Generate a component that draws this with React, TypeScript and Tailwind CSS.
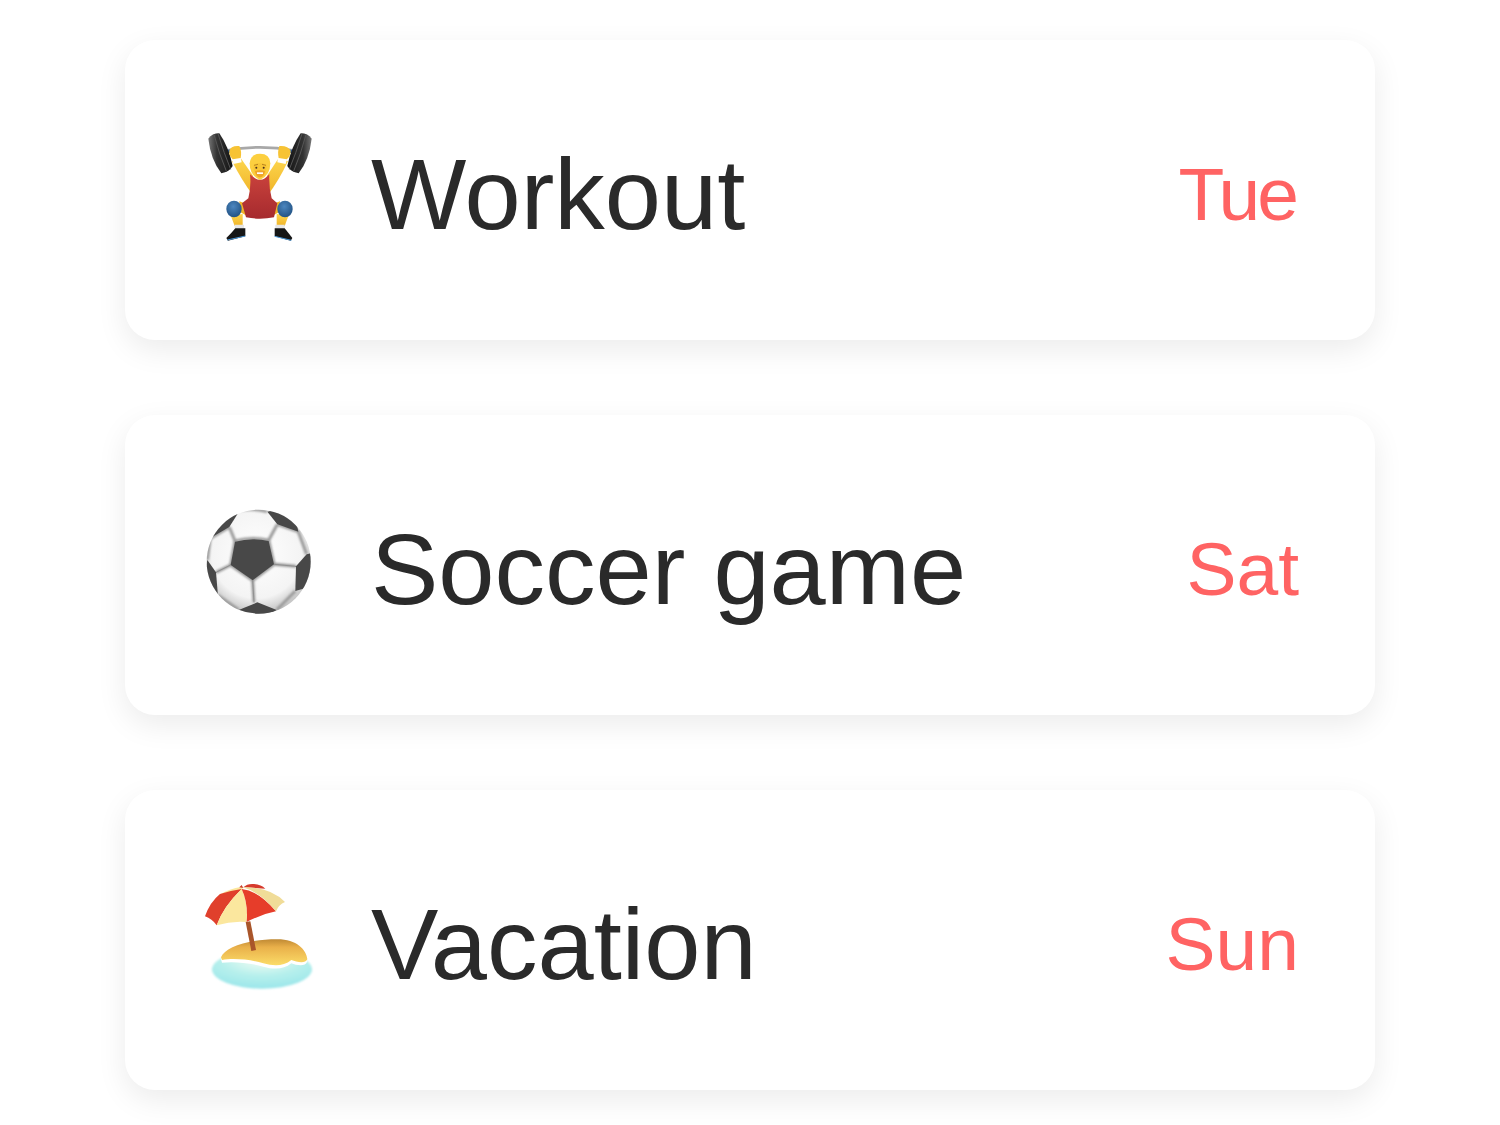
import type { ReactNode } from "react";

function Lifter() {
  return (
    <svg viewBox="0 0 420 390" className="mb-[10px] h-[130px] w-[140px] shrink-0">
      <defs>
        <linearGradient id="plate" x1="0" x2="1" y1="0" y2="0">
          <stop offset="0" stopColor="#777" />
          <stop offset="0.35" stopColor="#333" />
          <stop offset="1" stopColor="#141414" />
        </linearGradient>
        <linearGradient id="plate2" x1="1" x2="0" y1="0" y2="0">
          <stop offset="0" stopColor="#777" />
          <stop offset="0.35" stopColor="#333" />
          <stop offset="1" stopColor="#141414" />
        </linearGradient>
        <linearGradient id="skin" x1="0" x2="0" y1="0" y2="1">
          <stop offset="0" stopColor="#fdd64e" />
          <stop offset="1" stopColor="#f0b428" />
        </linearGradient>
        <linearGradient id="suit" x1="0" x2="0" y1="0" y2="1">
          <stop offset="0" stopColor="#c9423c" />
          <stop offset="1" stopColor="#a62a2e" />
        </linearGradient>
        <radialGradient id="knee" cx="0.45" cy="0.35" r="0.7">
          <stop offset="0" stopColor="#4c86bf" />
          <stop offset="1" stopColor="#1f4f80" />
        </radialGradient>
      </defs>

      {/* bar */}
      <path d="M108 92 Q210 72 312 92" fill="none" stroke="#a8a8a8" strokeWidth="8" />
      <path d="M104 94h20M296 94h20" stroke="#2b5fa5" strokeWidth="10" />

      {/* plates */}
      <path d="M55 56 Q66 40 88 40 Q116 80 128 138 Q118 156 94 160 Q62 118 55 56Z" fill="url(#plate)" />
      <path d="M365 56 Q354 40 332 40 Q304 80 292 138 Q302 156 326 160 Q358 118 365 56Z" fill="url(#plate2)" />
      <path d="M72 44 Q88 104 110 156M84 41 Q102 100 122 148M348 44 Q332 104 310 156M336 41 Q318 100 298 148" fill="none" stroke="#565656" strokeWidth="3" />

      {/* arms */}
      <path d="M126 124 L152 114 L188 166 L186 222 Q156 182 126 124Z" fill="url(#skin)" />
      <path d="M294 124 L266 114 L232 166 L236 222 Q266 182 294 124Z" fill="url(#skin)" />
      <path d="M126 116l26-4 3 15-25 5ZM264 112l27 4-4 16-25-5Z" fill="#fff" />
      <path d="M118 92 Q122 76 148 78 Q156 94 152 114 L128 118 Q116 106 118 92Z" fill="#f7c334" />
      <path d="M268 78 Q294 76 302 92 Q302 108 290 118 L266 114 Q262 94 268 78Z" fill="#f7c334" />

      {/* legs */}
      <path d="M122 286 L158 282 L158 318 L134 318Z" fill="url(#skin)" />
      <path d="M296 286 L260 282 L260 318 L284 318Z" fill="url(#skin)" />
      <path d="M134 314h28v12h-28ZM256 314h28v12h-28Z" fill="#e6e6e6" />
      <path d="M148 244 L176 254 L176 290 L150 276Z" fill="#f0b428" />
      <path d="M270 244 L242 254 L242 290 L268 276Z" fill="#f0b428" />

      {/* singlet */}
      <path d="M180 163 L195 175 Q210 184 225 175 L238 163 Q236 200 245 235 L262 250 L252 292 Q210 300 168 292 L156 250 L175 235 Q184 200 180 163Z" fill="url(#suit)" />

      {/* head */}
      <path d="M179 130 Q182 101 210 101 Q240 101 241 130 Q241 166 210 180 Q179 166 179 130Z" fill="#fccf3f" />
      <path d="M191 134 Q210 124 229 134 Q233 162 210 174 Q187 162 191 134Z" fill="#f8c636" />
      <path d="M195 154 Q210 148 225 154 Q222 172 210 172 Q198 172 195 154Z" fill="#efa62a" />
      <path d="M201 157h18v5h-18Z" fill="#fff" />
      <circle cx="199" cy="143" r="3" fill="#4a2f1e" />
      <circle cx="221" cy="143" r="3" fill="#4a2f1e" />
      <path d="M192 136l12-3M228 136l-12-3" stroke="#b98420" strokeWidth="3" />

      {/* knees */}
      <ellipse cx="132" cy="267" rx="23" ry="25" fill="url(#knee)" />
      <ellipse cx="285" cy="267" rx="23" ry="25" fill="url(#knee)" />

      {/* shoes */}
      <path d="M136 325h30v24 l-52 13 -5-8Q124 340 136 325Z" fill="#161616" />
      <path d="M254 325h30Q296 340 307 354l-5 8 -48-13Z" fill="#161616" />
      <path d="M112 360l54-12M254 349l50 12" stroke="#4a97d8" strokeWidth="3" />
    </svg>
  );
}

function Ball() {
  return (
    <svg viewBox="0 0 420 390" className="mb-[10px] h-[130px] w-[140px] shrink-0">
      <defs>
        <radialGradient id="ball" cx="0.48" cy="0.42" r="0.6">
          <stop offset="0" stopColor="#ffffff" />
          <stop offset="0.72" stopColor="#f4f4f4" />
          <stop offset="1" stopColor="#bdbdbd" />
        </radialGradient>
        <clipPath id="round">
          <circle cx="206" cy="200" r="156" />
        </clipPath>
        <filter id="bevel" x="-5%" y="-5%" width="110%" height="110%">
          <feGaussianBlur stdDeviation="2.5" />
        </filter>
      </defs>
      <circle cx="206" cy="200" r="156" fill="url(#ball)" />
      <g clipPath="url(#round)">
        <g fill="none" stroke="#9a9a9a" strokeWidth="9" filter="url(#bevel)">
          <path d="M118 96 L135 138 M236 136 L262 88 M150 45 Q190 38 232 50" />
          <path d="M60 130 L118 96 M262 88 L325 110 L350 178" />
          <path d="M52 195 L60 130 M122 210 L78 232 M252 208 L318 214" />
          <path d="M188 256 L192 322 M82 300 L146 345 M316 288 L260 345" />
          <path d="M135 138 Q185 124 236 136 L252 208 L188 256 L122 210Z" />
        </g>
        <path d="M188 256 L192 322M78 232 L122 210M252 208 L318 214" fill="none" stroke="#8c8c8c" strokeWidth="2.5" />
        <g fill="#484848">
          <path d="M135 140 Q185 126 236 138 L252 208 L188 256 L122 210Z" />
          <path d="M150 45 L118 96 L60 130 L40 85Z" />
          <path d="M232 50 L262 88 L325 110 L310 30Z" />
          <path d="M52 195 L78 232 L84 304 L30 290Z" />
          <path d="M350 178 L318 214 L316 288 L380 270 L380 170Z" />
          <path d="M146 345 L202 322 L260 345 L210 380Z" />
        </g>
      </g>
    </svg>
  );
}

function Island() {
  return (
    <svg viewBox="0 0 420 390" className="mb-[10px] h-[130px] w-[140px] shrink-0">
      <defs>
        <radialGradient id="water" cx="0.5" cy="0.25" r="0.75">
          <stop offset="0" stopColor="#f6fdf4" />
          <stop offset="0.55" stopColor="#b7f0ec" />
          <stop offset="1" stopColor="#9be6ea" />
        </radialGradient>
        <linearGradient id="sand" x1="0" x2="0" y1="0" y2="1">
          <stop offset="0" stopColor="#c08a34" />
          <stop offset="0.3" stopColor="#e9b04a" />
          <stop offset="1" stopColor="#fbdc68" />
        </linearGradient>
        <filter id="soft" x="-10%" y="-10%" width="120%" height="120%">
          <feGaussianBlur stdDeviation="3" />
        </filter>
      </defs>

      <ellipse cx="216" cy="298" rx="150" ry="58" fill="url(#water)" filter="url(#soft)" />
      <path d="M93 262 C105 232 170 208 262 208 C320 208 350 240 352 268 C346 286 320 280 304 274 C280 294 250 292 220 284 C180 272 130 268 96 272Z" fill="#fff" transform="translate(0 6)" />
      <path d="M93 262 C105 232 170 208 262 208 C320 208 350 240 352 268 C346 282 320 276 304 270 C280 290 250 288 220 280 C180 268 130 264 96 270Z" fill="url(#sand)" />

      {/* pole */}
      <path d="M167 156 L181 154 L198 240 L184 243Z" fill="#a9552a" />

      {/* canopy */}
      <path d="M160 52 Q172 40 192 42 Q214 44 226 56Z" fill="#d63a2c" />
      <path d="M88 74 Q118 56 155 50 L160 60 Q120 70 90 84Z" fill="#fbe79e" />
      <path d="M45 139 Q60 96 90 72 Q120 62 155 57 Q100 110 80 166 Q66 146 45 139Z" fill="#e0402c" />
      <path d="M155 57 Q175 100 170 156 Q125 152 80 166 Q100 110 155 57Z" fill="#fbe79e" />
      <path d="M155 57 Q205 62 258 124 Q216 132 170 156 Q175 100 155 57Z" fill="#e63d2a" />
      <path d="M158 52 Q240 50 285 96 Q266 104 258 124 Q210 66 158 52Z" fill="#f0dc98" />
      <path d="M148 52l7-7 5 9Z" fill="#c93a26" />
    </svg>
  );
}

function EventCard({ icon, title, day, dayClass }: { icon: ReactNode; title: string; day: string; dayClass?: string }) {
  return (
    <div className="flex h-[300px] items-center rounded-[30px] bg-white pr-[76px] pl-[65px] shadow-[0_10px_30px_rgba(0,0,0,0.08)]">
      {icon}
      <div className="mt-[9px] ml-[41px] flex-1 text-[101px] text-[#2a2a2a]">{title}</div>
      <div className={`mt-[9px] text-[75px] text-[#ff6363] ${dayClass ?? ""}`}>{day}</div>
    </div>
  );
}

export default function App() {
  return (
    <div className="flex h-[1125px] flex-col gap-[75px] bg-white px-[125px] pt-[40px] font-['Liberation_Sans',sans-serif]">
      <EventCard icon={<Lifter />} title="Workout" day="Tue" dayClass="mr-[3px] tracking-[-3px]" />
      <EventCard icon={<Ball />} title="Soccer game" day="Sat" />
      <EventCard icon={<Island />} title="Vacation" day="Sun" />
    </div>
  );
}
